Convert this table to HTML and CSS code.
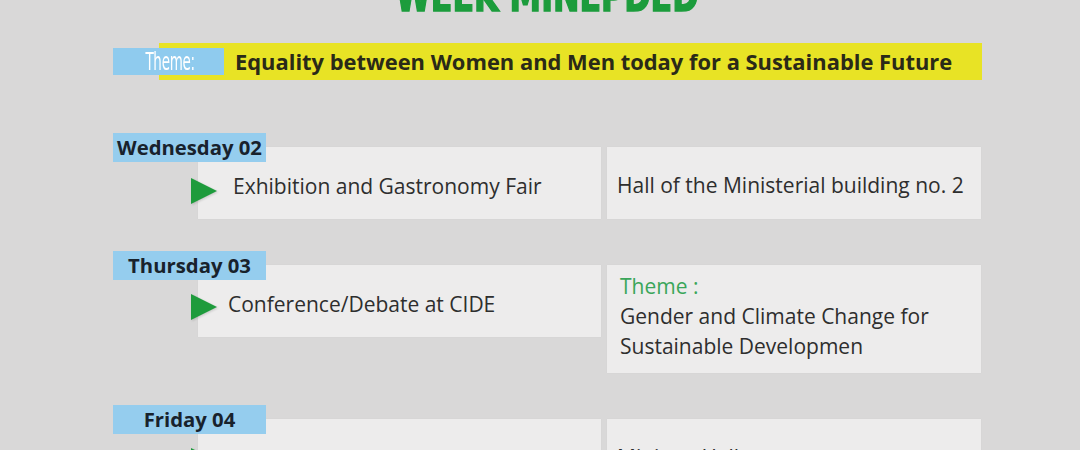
FILE: index.html
```html
<!DOCTYPE html>
<html lang="en">
<head>
<meta charset="utf-8">
<title>Week MINEPDED</title>
<link rel="stylesheet" href="styles.css">
</head>
<body>
<div class="page">
  <h1 class="title"><span class="title-text">WEEK MINEPDED</span></h1>

  <div class="theme-row">
    <div class="theme-tag"><span class="theme-tag-text">Theme:</span></div>
    <div class="theme-bar">Equality between Women and Men today for a Sustainable Future</div>
  </div>

  <section class="day">
    <div class="day-label">Wednesday 02</div>
    <div class="day-row">
      <div class="card card-event">
        <svg class="play" viewBox="0 0 28 28" width="28" height="28"><polygon points="1,1 27,14 1,27" fill="#1e9b3c"/></svg>
        <span class="event-text">Exhibition and Gastronomy Fair</span>
      </div>
      <div class="card card-place">
        <p class="place-text place-single">Hall of the Ministerial building no. 2</p>
      </div>
    </div>
  </section>

  <section class="day">
    <div class="day-label">Thursday 03</div>
    <div class="day-row">
      <div class="card card-event">
        <svg class="play play-high" viewBox="0 0 28 28" width="28" height="28"><polygon points="1,1 27,14 1,27" fill="#1e9b3c"/></svg>
        <span class="event-text event-text-tight">Conference/Debate at CIDE</span>
      </div>
      <div class="card card-place">
        <p class="place-text"><span class="place-theme">Theme :</span><br>Gender and Climate Change for<br>Sustainable Developmen</p>
      </div>
    </div>
  </section>

  <section class="day">
    <div class="day-label">Friday 04</div>
    <div class="day-row">
      <div class="card card-event">
        <svg class="play play-high" viewBox="0 0 28 28" width="28" height="28"><polygon points="1,1 27,14 1,27" fill="#1e9b3c"/></svg>
        <span class="event-text event-text-tight">Sports Walk Day</span>
      </div>
      <div class="card card-place">
        <p class="place-text place-single">Ministry Hall</p>
      </div>
    </div>
  </section>
</div>
</body>
</html>
```

FILE: styles.css
```css
html, body {
  margin: 0;
  padding: 0;
}

body {
  background: #d9d8d8;
  font-family: "Open Sans", Lato, sans-serif;
  color: #2e2e2e;
  overflow: hidden;
}

.page {
  width: 869px;
  padding-left: 113px;
}

.title {
  margin: -26px 0 0 0;
  font-family: "DejaVu Sans Condensed", "DejaVu Sans", sans-serif;
  font-weight: 700;
  font-size: 44px;
  line-height: 44px;
  color: #1c9c3c;
  text-align: center;
  white-space: nowrap;
}

.title-text {
  display: inline-block;
  transform: scaleX(0.8);
  -webkit-text-stroke: 1.5px #1c9c3c;
}

.theme-row {
  display: flex;
  align-items: center;
  margin-top: 25px;
  height: 37px;
}

.theme-tag {
  position: relative;
  z-index: 1;
  flex: 0 0 111px;
  height: 27px;
  background: #8fcbee;
  display: flex;
  align-items: center;
  justify-content: center;
}

.theme-tag-text {
  display: inline-block;
  font-family: "DejaVu Sans Condensed", "DejaVu Sans", sans-serif;
  font-size: 25px;
  line-height: 27px;
  color: #ffffff;
  transform: scaleX(0.6);
  letter-spacing: -0.5px;
  margin-left: 4px;
}

.theme-bar {
  flex: 1;
  margin-left: -65px;
  height: 37px;
  background: #e8e325;
  padding-left: 76px;
  display: flex;
  align-items: center;
  font-weight: 700;
  font-size: 21.9px;
  color: #2a2a18;
  white-space: nowrap;
}

.day {
  margin-top: 53px;
}

.day + .day {
  margin-top: 32px;
}

.day-label {
  position: relative;
  z-index: 1;
  width: 153px;
  height: 29px;
  background: #95cdee;
  text-align: center;
  font-weight: 700;
  font-size: 20.3px;
  line-height: 29px;
  color: #18222c;
}

.day-row {
  display: flex;
  align-items: flex-start;
  gap: 6px;
  margin-top: -15px;
  padding-left: 85px;
}

.card {
  background: #edecec;
  min-height: 72px;
  box-shadow: 0 0 1px rgba(0, 0, 0, 0.06);
}

.card-event {
  width: 403px;
  display: flex;
  align-items: flex-start;
}

.play {
  flex: 0 0 28px;
  margin-left: -8px;
  margin-top: 30px;
  filter: drop-shadow(1px 1px 1px rgba(0, 0, 0, 0.15));
}

.play-high {
  margin-top: 28px;
}

.event-text {
  margin-left: 15px;
  margin-top: 26px;
  font-size: 21px;
  line-height: 26px;
  white-space: nowrap;
}

.event-text-tight {
  margin-left: 10px;
}

.card-place {
  width: 374px;
}

.place-text {
  margin: 0;
  padding: 6px 10px 12px 13px;
  font-size: 21px;
  line-height: 30px;
  white-space: nowrap;
}

.place-single {
  padding-top: 23px;
  padding-left: 10px;
  padding-bottom: 19px;
}

.place-theme {
  color: #3aa65a;
}
```
